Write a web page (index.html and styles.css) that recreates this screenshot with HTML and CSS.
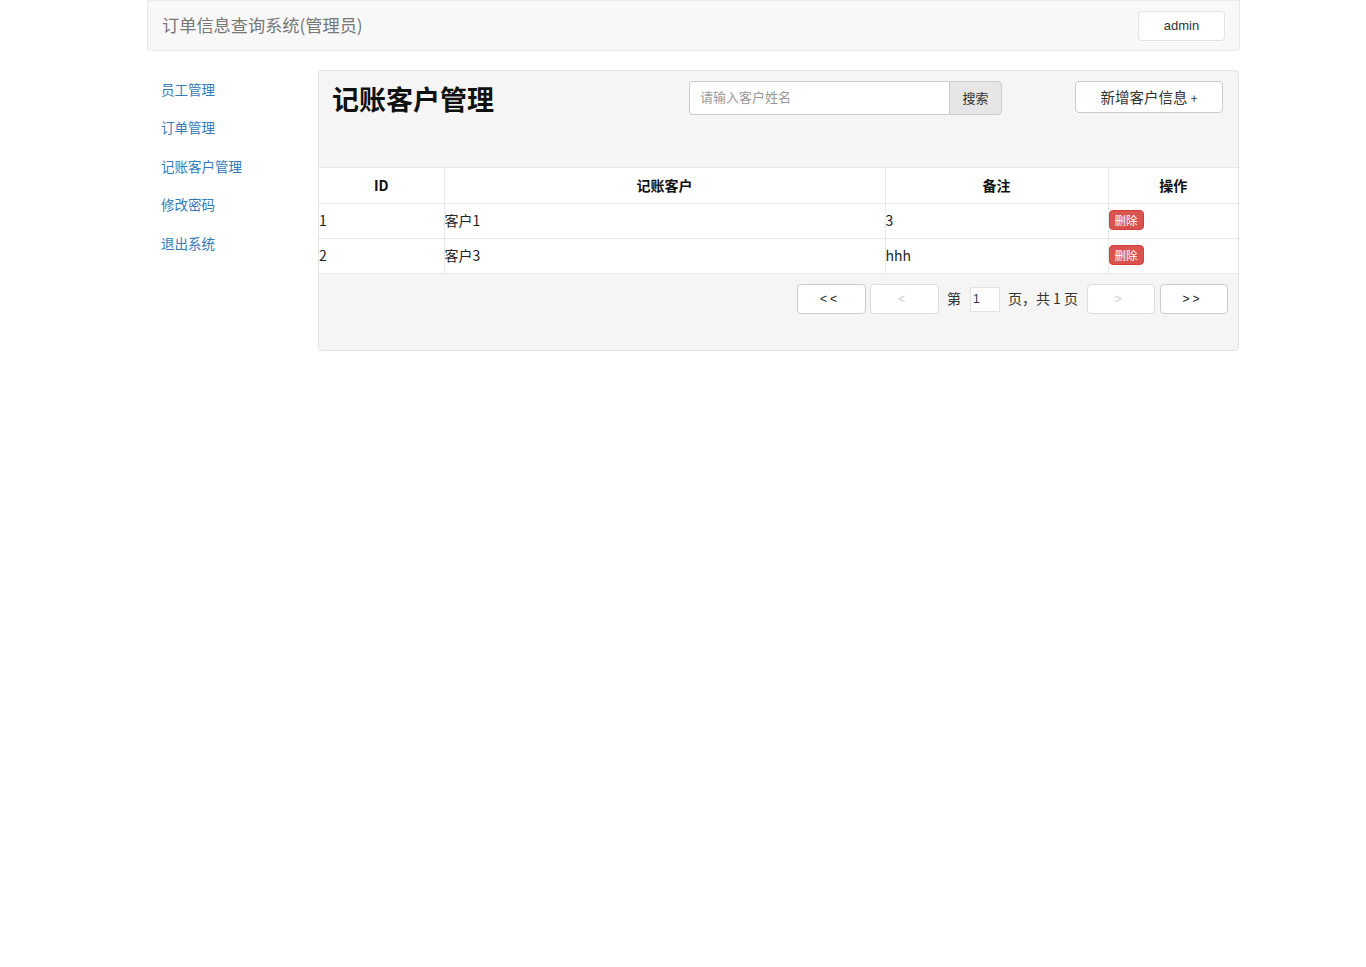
FILE: index.html
```html
<!DOCTYPE html>
<html lang="zh-CN">
<head>
<meta charset="utf-8">
<title>记账客户管理</title>
<link rel="stylesheet" href="styles.css">
</head>
<body>
<div class="page">
  <nav class="navbar">
    <span class="brand">订单信息查询系统(管理员)</span>
    <button class="user-btn">admin</button>
  </nav>
  <div class="layout">
    <ul class="sidebar">
      <li><a href="#">员工管理</a></li>
      <li><a href="#">订单管理</a></li>
      <li><a href="#">记账客户管理</a></li>
      <li><a href="#">修改密码</a></li>
      <li><a href="#">退出系统</a></li>
    </ul>
    <div class="panel">
      <div class="panel-head">
        <h2 class="title">记账客户管理</h2>
        <div class="search">
          <input class="search-input" type="text" placeholder="请输入客户姓名">
          <button class="search-btn">搜索</button>
        </div>
        <button class="add-btn">新增客户信息 <span class="plus">+</span></button>
      </div>
      <table class="grid">
        <colgroup>
          <col class="c-id"><col class="c-name"><col class="c-note"><col class="c-op">
        </colgroup>
        <thead>
          <tr><th>ID</th><th>记账客户</th><th>备注</th><th>操作</th></tr>
        </thead>
        <tbody>
          <tr><td>1</td><td>客户1</td><td>3</td><td><button class="del-btn">删除</button></td></tr>
          <tr><td>2</td><td>客户3</td><td>hhh</td><td><button class="del-btn">删除</button></td></tr>
        </tbody>
      </table>
      <div class="pager">
        <button class="pg-btn">&lt;&lt;</button>
        <button class="pg-btn disabled">&lt;</button>
        <span class="pg-text first">第</span>
        <input class="pg-input" type="text" value="1">
        <span class="pg-text">页，共 1 页</span>
        <button class="pg-btn disabled narrow">&gt;</button>
        <button class="pg-btn last narrow">&gt;&gt;</button>
      </div>
    </div>
  </div>
</div>
</body>
</html>
```
FILE: styles.css
```css
* { box-sizing: border-box; }
body {
  margin: 0;
  font-family: "Liberation Sans", "Noto Sans CJK SC", sans-serif;
  font-size: 14px;
  color: #333;
  background: #fff;
}
.page {
  width: 1093px;
  margin-left: 147px;
}
.navbar {
  height: 51px;
  background: #f8f8f8;
  border: 1px solid #e7e7e7;
  border-top-color: #ececec;
  border-radius: 0 0 4px 4px;
  display: flex;
  align-items: center;
  justify-content: space-between;
  padding: 0 14px 0 14px;
}
.brand {
  font-size: 17.2px;
  color: #777;
  font-family: "Noto Sans CJK SC", sans-serif;
  margin-top: -2px;
}
.user-btn {
  width: 87px;
  height: 30px;
  background: #fff;
  border: 1px solid #e3e3e3;
  border-radius: 4px;
  font-family: "Liberation Sans", sans-serif;
  font-size: 13px;
  color: #333;
}
.layout {
  display: flex;
  margin-top: 19px;
}
.sidebar {
  list-style: none;
  margin: 0;
  padding: 0;
  width: 171px;
}
.sidebar li a {
  display: block;
  padding: 9px 14px 9px 14px;
  line-height: 20.4px;
  font-size: 13.5px;
  color: #337ab7;
  text-decoration: none;
  font-family: "Noto Sans CJK SC", sans-serif;
}
.panel {
  width: 921px;
  height: 281px;
  background: #f5f5f5;
  border: 1px solid #e3e3e3;
  border-radius: 4px;
}
.panel-head {
  height: 96px;
  display: flex;
  align-items: flex-start;
  padding: 10px 15px 0 13px;
}
.title {
  margin: 0;
  font-size: 27px;
  line-height: 36px;
  font-weight: bold;
  color: #111;
  font-family: "Noto Sans CJK SC", sans-serif;
}
.search {
  display: flex;
  margin-left: auto;
}
.search-input {
  width: 260px;
  height: 34px;
  border: 1px solid #ccc;
  border-right: none;
  border-radius: 4px 0 0 4px;
  padding: 0 10px 3px 10px;
  font-size: 13px;
  font-family: "Noto Sans CJK SC", sans-serif;
  background: #fff;
}
.search-input::placeholder { color: #999; }
.search-btn {
  width: 53px;
  height: 34px;
  border: 1px solid #ccc;
  border-radius: 0 4px 4px 0;
  background: #e6e6e6;
  font-size: 13px;
  font-family: "Noto Sans CJK SC", sans-serif;
  color: #333;
  padding: 0 0 1px 0;
}
.add-btn {
  margin-left: 73px;
  width: 148px;
  height: 32px;
  background: #fff;
  border: 1px solid #ccc;
  border-radius: 4px;
  font-size: 14.5px;
  font-family: "Noto Sans CJK SC", sans-serif;
  color: #333;
  padding: 0 0 2px 0;
}
.add-btn .plus { font-size: 12px; }
.grid {
  width: 919px;
  border-collapse: collapse;
  background: #fff;
  font-family: "Noto Sans CJK SC", sans-serif;
}
.c-id { width: 125px; }
.c-name { width: 441px; }
.c-note { width: 223px; }
.c-op { width: 130px; }
.grid th, .grid td {
  border: 1px solid #e8e8e8;
  padding: 0 0 2px 0;
  text-align: left;
  font-size: 14px;
  color: #222;
}
.grid th {
  height: 36px;
  text-align: center;
  font-weight: bold;
  color: #111;
}
.grid td { height: 35px; }
.grid tr > :first-child { border-left: none; }
.grid tr > :last-child { border-right: none; }
.del-btn {
  height: 20px;
  padding: 0 5px;
  border: 1px solid #d43f3a;
  background: #d9534f;
  color: #fff;
  border-radius: 4px;
  font-size: 11.5px;
  font-family: "Noto Sans CJK SC", sans-serif;
  line-height: 18px;
  margin-bottom: 1px;
}
.pager {
  display: flex;
  justify-content: flex-end;
  align-items: center;
  padding: 10px 10px 0 0;
  font-family: "Noto Sans CJK SC", sans-serif;
}
.pg-btn {
  width: 69px;
  height: 30px;
  background: #fff;
  border: 1px solid #ccc;
  border-radius: 4px;
  font-family: "Liberation Sans", sans-serif;
  font-size: 12px;
  letter-spacing: 3px;
  padding-left: 3px;
  color: #222;
  margin-left: 4px;
}
.pg-btn.narrow { width: 68px; }
.pg-btn.last { margin-left: 5px; }
.pg-btn.disabled { color: #ccc; border-color: #ddd; }
.pg-text {
  font-size: 14px;
  color: #333;
  margin: 0 5px 0 8px;
  padding-bottom: 2px;
}
.pg-text.first { margin: 0 9px 0 8px; }
.pg-input {
  width: 30px;
  height: 25px;
  border: 1px solid #e3e3e3;
  background: #fff;
  font-size: 12px;
  padding: 0 2px;
  font-family: "Liberation Sans", sans-serif;
  color: #333;
}
```
